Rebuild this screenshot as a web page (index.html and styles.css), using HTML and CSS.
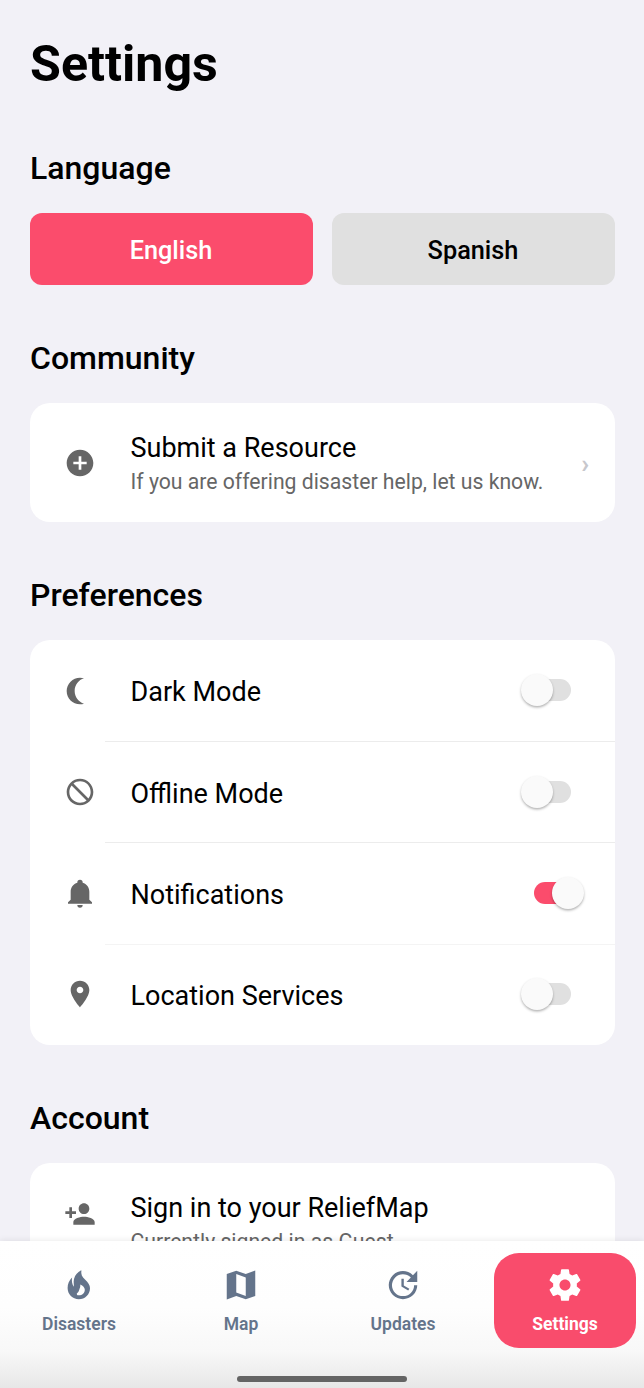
FILE: index.html
```html
<!DOCTYPE html>
<html lang="en">
<head>
<meta charset="utf-8">
<title>Settings</title>
<link rel="stylesheet" href="styles.css">
</head>
<body>
<main class="screen">
  <h1 class="title">Settings</h1>

  <section class="section">
    <h2 class="heading">Language</h2>
    <div class="languages">
      <button class="language language-active">English</button>
      <button class="language">Spanish</button>
    </div>
  </section>

  <section class="section">
    <h2 class="heading">Community</h2>
    <div class="card">
      <div class="row row-tall">
        <svg class="icon" viewBox="0 0 24 24"><path d="M12 2C6.48 2 2 6.48 2 12s4.48 10 10 10 10-4.48 10-10S17.52 2 12 2zm5 11h-4v4h-2v-4H7v-2h4V7h2v4h4v2z"/></svg>
        <div class="text">
          <div class="label">Submit a Resource</div>
          <div class="note">If you are offering disaster help, let us know.</div>
        </div>
        <span class="chevron">›</span>
      </div>
    </div>
  </section>

  <section class="section">
    <h2 class="heading">Preferences</h2>
    <div class="card">
      <div class="row">
        <svg class="icon" viewBox="0 0 24 24"><path d="M12 2C6.48 2 2 6.48 2 12s4.48 10 10 10c1.05 0 2.05-.16 3-.46C10.94 20.27 8 16.48 8 12s2.94-8.27 7-9.54C14.05 2.16 13.05 2 12 2z"/></svg>
        <div class="cell"><span class="label">Dark Mode</span><span class="switch"><span class="thumb"></span></span></div>
      </div>
      <div class="row">
        <svg class="icon" viewBox="0 0 24 24"><path d="M12 2C6.48 2 2 6.48 2 12s4.48 10 10 10 10-4.48 10-10S17.52 2 12 2zm0 18c-4.42 0-8-3.58-8-8 0-1.85.63-3.55 1.69-4.9L16.9 18.31C15.55 19.37 13.85 20 12 20zm6.31-3.1L7.1 5.69C8.45 4.63 10.15 4 12 4c4.42 0 8 3.58 8 8 0 1.85-.63 3.55-1.69 4.9z"/></svg>
        <div class="cell"><span class="label">Offline Mode</span><span class="switch"><span class="thumb"></span></span></div>
      </div>
      <div class="row">
        <svg class="icon" viewBox="0 0 24 24"><path d="M21 19V20H3V19L5 17V11C5 7.9 7.03 5.17 10 4.29V4A2 2 0 0 1 12 2 2 2 0 0 1 14 4V4.29C16.97 5.17 19 7.9 19 11V17L21 19M14 21A2 2 0 0 1 12 23 2 2 0 0 1 10 21"/></svg>
        <div class="cell"><span class="label">Notifications</span><span class="switch switch-on"><span class="thumb"></span></span></div>
      </div>
      <div class="row">
        <svg class="icon" viewBox="0 0 24 24"><path d="M12 2C8.13 2 5 5.13 5 9c0 5.25 7 13 7 13s7-7.75 7-13c0-3.87-3.13-7-7-7zm0 9.5c-1.38 0-2.5-1.12-2.5-2.5s1.12-2.5 2.5-2.5 2.5 1.12 2.5 2.5-1.12 2.5-2.5 2.5z"/></svg>
        <div class="cell"><span class="label">Location Services</span><span class="switch"><span class="thumb"></span></span></div>
      </div>
    </div>
  </section>

  <section class="section">
    <h2 class="heading">Account</h2>
    <div class="card">
      <div class="row row-tall row-account">
        <svg class="icon" viewBox="0 0 24 24"><path d="M15 12c2.21 0 4-1.79 4-4s-1.79-4-4-4-4 1.79-4 4 1.79 4 4 4zm-9-2V7H4v3H1v2h3v3h2v-3h3v-2H6zm9 4c-2.67 0-8 1.34-8 4v2h16v-2c0-2.66-5.33-4-8-4z"/></svg>
        <div class="text">
          <div class="label">Sign in to your ReliefMap</div>
          <div class="note">Currently signed in as Guest.</div>
        </div>
      </div>
    </div>
  </section>
</main>

<nav class="tabs">
  <div class="tab-list">
    <a class="tab">
      <svg class="tab-icon" viewBox="0 0 38 38"><path fill-rule="evenodd" d="M21.4 4.300C20.800 8.600 22 10.700 25 13.600C28.300 16.800 30 19.200 30 22.200C30 28.300 25 33.200 18.800 33.200C12.500 33.200 7.600 28.500 7.600 22.100C7.600 17.700 9.200 14.200 12.100 11.500C11.600 14.700 11.900 18 13.700 20.800C14.300 19 13.100 16.500 14 13C15 9 17.800 5.800 21.400 4.300ZM20.300 18.400C20.500 21 19.800 22 19.100 24.200C18.500 26 17.600 26.800 16.800 27.400C16.700 28.200 17.200 29.200 18.100 29.300C21.800 29.700 24.800 27.300 24.800 23.800C24.800 21.500 23 19.300 20.300 18.400Z"/></svg>
      <span class="tab-label">Disasters</span>
    </a>
    <a class="tab">
      <svg class="tab-icon" viewBox="0 0 24 24"><path d="M15 5.100L9 3 3 5.020v16.200l6-2.330 6 2.100 6-2.020V2.770L15 5.100zm0 13.790l-6-2.110V5.110l6 2.110v11.670z"/></svg>
      <span class="tab-label">Map</span>
    </a>
    <a class="tab">
      <svg class="tab-icon" viewBox="0 0 24 24"><path d="M21 10.120h-6.780l2.740-2.820c-2.730-2.700-7.150-2.800-9.880-.1-2.730 2.710-2.730 7.080 0 9.790 2.730 2.710 7.150 2.710 9.880 0C18.320 15.650 19 14.080 19 12.100h2c0 1.980-.88 4.550-2.640 6.290-3.510 3.480-9.210 3.480-12.720 0-3.500-3.470-3.530-9.110-.02-12.580 3.510-3.470 9.140-3.470 12.650 0L21 3v7.120zM12.500 8v4.250l3.500 2.080-.72 1.210L11 13V8h1.500z"/></svg>
      <span class="tab-label">Updates</span>
    </a>
    <a class="tab tab-active">
      <svg class="tab-icon" viewBox="0 0 24 24"><path d="M19.430 12.980c.04-.32.07-.64.07-.98s-.03-.66-.07-.98l2.110-1.650c.19-.15.24-.42.12-.64l-2-3.460c-.12-.22-.39-.3-.61-.22l-2.490 1c-.52-.4-1.080-.73-1.690-.98l-.38-2.650C14.460 2.180 14.250 2 14 2h-4c-.25 0-.46.18-.49.42l-.38 2.650c-.61.25-1.170.59-1.690.98l-2.490-1c-.23-.09-.49 0-.61.22l-2 3.460c-.13.22-.07.49.12.64l2.110 1.650c-.04.32-.07.65-.07.98s.03.66.07.98l-2.110 1.650c-.19.15-.24.42-.12.64l2 3.460c.12.22.39.3.61.22l2.490-1c.52.4 1.080.73 1.690.98l.38 2.650c.03.24.24.42.49.42h4c.25 0 .46-.18.49-.42l.38-2.650c.61-.25 1.170-.59 1.690-.98l2.490 1c.23.09.49 0 .61-.22l2-3.460c.12-.22.07-.49-.12-.64l-2.110-1.650zM12 15.500c-1.930 0-3.500-1.570-3.500-3.500s1.570-3.500 3.500-3.500 3.500 1.570 3.500 3.500-1.570 3.500-3.500 3.500z"/></svg>
      <span class="tab-label">Settings</span>
    </a>
  </div>
  <div class="home-bar"></div>
</nav>
</body>
</html>
```
FILE: styles.css
```css
* {
  box-sizing: border-box;
}

body {
  margin: 0;
  height: 1388px;
  overflow: hidden;
  position: relative;
  background: #f2f1f7;
  color: #000;
  font-family: Roboto, sans-serif;
}

.screen {
  height: 1388px;
  overflow: hidden;
  padding: 34px 29px 0 30px;
}

.title {
  margin: 0;
  font-size: 50.2px;
  line-height: 60px;
  font-weight: 700;
}

.section {
  margin-top: 53px;
}

.title + .section {
  margin-top: 54px;
}

.heading {
  margin: 0 0 25px;
  font-size: 32px;
  line-height: 40px;
  font-weight: 500;
}

.languages {
  display: flex;
  gap: 19px;
}

.language {
  flex: 1;
  height: 72px;
  padding: 3px 1px 0 0;
  border: 0;
  border-radius: 12px;
  background: #e0e0e0;
  color: #000;
  font: 500 25.3px/36px Roboto, sans-serif;
}

.language-active {
  background: #fb4c6c;
  color: #fff;
}

.card {
  border-radius: 20px;
  background: #fff;
  overflow: hidden;
}

.row {
  display: flex;
  align-items: center;
  height: 101.2px;
  padding-left: 34px;
}

.row-tall {
  height: 119px;
  padding-right: 26px;
}

.row-account .icon {
  margin-bottom: 17px;
}

.icon {
  width: 32px;
  height: 32px;
  flex: none;
  fill: #666;
}

.cell {
  flex: 1;
  height: 100%;
  margin-left: 9px;
  padding: 0 30px 0 25.5px;
  display: flex;
  align-items: center;
  justify-content: space-between;
}

.row + .row .cell {
  border-top: 1px solid #ececec;
}

.row:last-child .cell {
  border-top-color: #f4f4f4;
}

.label {
  font-size: 27px;
  line-height: 36px;
  padding-top: 3px;
}

.text {
  flex: 1;
  margin-left: 34.5px;
}

.note {
  font-size: 21.2px;
  line-height: 32px;
  color: #666;
}

.chevron {
  font-size: 26px;
  line-height: 30px;
  font-weight: 700;
  color: #c7c7cc;
  padding-top: 2px;
}

.switch {
  display: flex;
  align-items: center;
  width: 44px;
  height: 22px;
  margin: 0 14px 1px 0;
  border-radius: 11px;
  background: #e0e0e0;
}

.thumb {
  flex: none;
  width: 32px;
  height: 32px;
  margin-left: -6px;
  border-radius: 50%;
  background: #fafafa;
  box-shadow: 0 1.5px 2.5px rgba(0, 0, 0, 0.3);
}

.switch-on {
  margin-right: 7px;
  justify-content: flex-end;
  background: #fb4c6c;
}

.switch-on .thumb {
  margin: 0 -6px 0 0;
}

.tabs {
  position: absolute;
  left: 0;
  right: 0;
  bottom: 0;
  height: 147px;
  padding: 12px 8px 0;
  display: flex;
  flex-direction: column;
  align-items: center;
  background: linear-gradient(#fff 0, #fefefe 45%, #f8f8f8 75%, #e7e7e7 100%);
  box-shadow: 0 -1px 6px rgba(0, 0, 0, 0.08);
}

.tab-list {
  width: 100%;
  display: grid;
  grid-template-columns: repeat(4, 1fr);
  gap: 20px;
}

.tab {
  height: 95px;
  padding-top: 13px;
  display: flex;
  flex-direction: column;
  align-items: center;
  border-radius: 25px;
  color: #64748b;
}

.tab-active {
  background: #f94c6c;
  color: #fff;
}

.tab-icon {
  width: 38px;
  height: 38px;
  fill: currentColor;
}

.tab-label {
  margin-top: 9px;
  font-size: 17.5px;
  line-height: 22px;
  font-weight: 600;
}

.tab-active .tab-label {
  font-weight: 700;
}

.home-bar {
  width: 170px;
  height: 6px;
  margin-top: 28px;
  border-radius: 3px;
  background: #646464;
}
```
